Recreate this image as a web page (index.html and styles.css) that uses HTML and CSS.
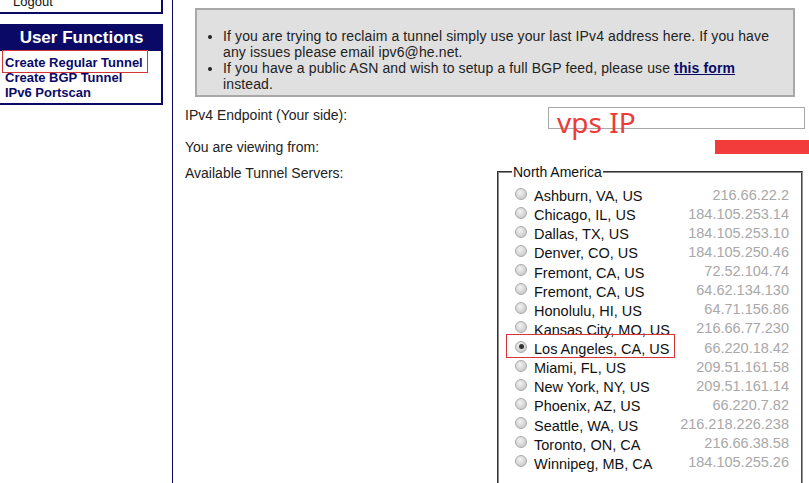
FILE: index.html
```html
<!DOCTYPE html>
<html>
<head>
<meta charset="utf-8">
<link rel="stylesheet" href="styles.css">
</head>
<body>
<div class="page">
  <aside class="sidebar">
    <div class="box logout-box">
      <a class="logout" href="#">Logout</a>
    </div>
    <div class="box functions">
      <div class="box-title">User Functions</div>
      <ul class="links">
        <li><a href="#">Create Regular Tunnel</a></li>
        <li><a href="#">Create BGP Tunnel</a></li>
        <li><a href="#">IPv6 Portscan</a></li>
      </ul>
    </div>
  </aside>
  <main class="content">
    <div class="notice">
      <ul>
        <li>If you are trying to reclaim a tunnel simply use your last IPv4 address here. If you have any issues please email ipv6@he.net.</li>
        <li>If you have a public ASN and wish to setup a full BGP feed, please use <a href="#">this form</a> instead.</li>
      </ul>
    </div>
    <div class="form">
      <div class="label row1">IPv4 Endpoint (Your side):</div>
      <div class="value row1"><input class="ip-input" type="text"></div>
      <div class="label row2">You are viewing from:</div>
      <div class="value row2"></div>
      <div class="label row3">Available Tunnel Servers:</div>
      <div class="value row3">
        <fieldset class="servers">
          <legend>North America</legend>
          <div class="srv"><span class="radio"></span><span class="name">Ashburn, VA, US</span><span class="ip">216.66.22.2</span></div>
          <div class="srv"><span class="radio"></span><span class="name">Chicago, IL, US</span><span class="ip">184.105.253.14</span></div>
          <div class="srv"><span class="radio"></span><span class="name">Dallas, TX, US</span><span class="ip">184.105.253.10</span></div>
          <div class="srv"><span class="radio"></span><span class="name">Denver, CO, US</span><span class="ip">184.105.250.46</span></div>
          <div class="srv"><span class="radio"></span><span class="name">Fremont, CA, US</span><span class="ip">72.52.104.74</span></div>
          <div class="srv"><span class="radio"></span><span class="name">Fremont, CA, US</span><span class="ip">64.62.134.130</span></div>
          <div class="srv"><span class="radio"></span><span class="name">Honolulu, HI, US</span><span class="ip">64.71.156.86</span></div>
          <div class="srv"><span class="radio"></span><span class="name">Kansas City, MO, US</span><span class="ip">216.66.77.230</span></div>
          <div class="srv"><span class="radio checked"></span><span class="name">Los Angeles, CA, US</span><span class="ip">66.220.18.42</span></div>
          <div class="srv"><span class="radio"></span><span class="name">Miami, FL, US</span><span class="ip">209.51.161.58</span></div>
          <div class="srv"><span class="radio"></span><span class="name">New York, NY, US</span><span class="ip">209.51.161.14</span></div>
          <div class="srv"><span class="radio"></span><span class="name">Phoenix, AZ, US</span><span class="ip">66.220.7.82</span></div>
          <div class="srv"><span class="radio"></span><span class="name">Seattle, WA, US</span><span class="ip">216.218.226.238</span></div>
          <div class="srv"><span class="radio"></span><span class="name">Toronto, ON, CA</span><span class="ip">216.66.38.58</span></div>
          <div class="srv"><span class="radio"></span><span class="name">Winnipeg, MB, CA</span><span class="ip">184.105.255.26</span></div>
        </fieldset>
      </div>
    </div>
  </main>
</div>
<div class="mark mark-link"></div>
<div class="mark mark-la"></div>
<div class="annot-text">vps IP</div>
<div class="redact"></div>
</body>
</html>
```

FILE: styles.css
```css
html, body {
  margin: 0;
  padding: 0;
  background: #fff;
  overflow: hidden;
}
body {
  font-family: "Liberation Sans", Arial, sans-serif;
  font-size: 13px;
  color: #000;
  width: 809px;
  height: 483px;
  position: relative;
}
.page {
  display: flex;
  align-items: stretch;
  height: 483px;
}
.sidebar {
  width: 172px;
  flex: none;
  border-right: 1px solid #0a0a66;
}
.box {
  margin-left: -2px;
  border: 2px solid #0a0a66;
  box-sizing: border-box;
  width: 165px;
}
.logout-box {
  height: 14px;
  border-top: none;
  overflow: hidden;
}
.logout {
  display: block;
  color: #111;
  text-decoration: none;
  margin-top: -6px;
  padding-left: 13px;
  line-height: 16px;
}
.functions {
  margin-top: 10px;
  height: 81px;
}
.box-title {
  background: #0a0a66;
  color: #fff;
  font-weight: bold;
  font-size: 17px;
  text-align: center;
  height: 25px;
  line-height: 24px;
  padding-left: 2px;
}
.links {
  list-style: none;
  margin: 0;
  padding: 4px 0 0 5px;
}
.links li {
  line-height: 15px;
}
.links a {
  color: #0a0a66;
  font-weight: bold;
  text-decoration: none;
  font-size: 13px;
}
.content {
  flex: 1;
  min-width: 0;
}
.notice {
  margin: 8px 0 0 22px;
  width: 600px;
  box-sizing: border-box;
  background: #e0e0e0;
  border: 2px solid #a8a8a8;
  padding: 18px 22px 3px 0;
  font-size: 14px;
  letter-spacing: 0.12px;
  color: #222;
}
.notice ul {
  margin: 0;
  padding: 0 0 0 26px;
}
.notice li {
  line-height: 16px;
}
.notice a {
  color: #0a0a66;
  font-weight: bold;
}
.form {
  display: grid;
  grid-template-columns: 363px 1fr;
  padding-left: 12px;
  font-size: 14px;
  color: #222;
}
.label.row1 { padding-top: 10px; line-height: 17px; }
.value.row1 { padding-top: 10px; }
.label.row2 { padding-top: 10px; line-height: 17px; }
.label.row3 { padding-top: 9px; line-height: 17px; }
.ip-input {
  display: block;
  width: 257px;
  height: 22px;
  box-sizing: border-box;
  border: 1px solid #a8a8a8;
  margin: 0;
  padding: 0;
}
.value.row3 {
  padding-top: 9px;
}
.servers {
  margin: 0 0 0 -51px;
  width: 306px;
  box-sizing: border-box;
  border: 2px groove #c8c8c8;
  border-color: #888 #999 #999 #888;
  padding: 6px 12px 20px 16px;
}
.servers legend {
  padding: 0 1px;
  margin-left: -3px;
  font-size: 14px;
  color: #111;
  line-height: 14px;
}
.srv {
  display: flex;
  align-items: center;
  height: 19.14px;
}
.radio {
  width: 12px;
  height: 12px;
  border-radius: 50%;
  box-sizing: border-box;
  border: 1px solid #aaa;
  background: radial-gradient(circle at 40% 35%, #f2f2f2 0%, #d6d6d6 55%, #c0c0c0 100%);
  flex: none;
  margin-right: 7px;
  margin-top: -2px;
  position: relative;
}
.radio.checked::after {
  content: "";
  position: absolute;
  left: 2.5px;
  top: 2.5px;
  width: 5px;
  height: 5px;
  border-radius: 50%;
  background: #333;
}
.name {
  flex: 1;
  font-size: 14.5px;
  color: #111;
  padding-top: 3px;
}
.ip {
  font-size: 14.5px;
  color: #a8a8a8;
  text-align: right;
}
.mark {
  position: absolute;
  border: 1px solid #d6333a;
  box-sizing: border-box;
}
.mark-link {
  left: 2px;
  top: 50px;
  width: 146px;
  height: 23px;
}
.mark-la {
  left: 506px;
  top: 334px;
  width: 169px;
  height: 24px;
}
.annot-text {
  position: absolute;
  left: 557px;
  top: 106px;
  color: #ef3a3a;
  font-family: "Noto Sans", sans-serif;
  font-size: 28px;
  line-height: 32px;
}
.redact {
  position: absolute;
  left: 715px;
  top: 140px;
  width: 94px;
  height: 14px;
  background: #f23b3b;
}
```
